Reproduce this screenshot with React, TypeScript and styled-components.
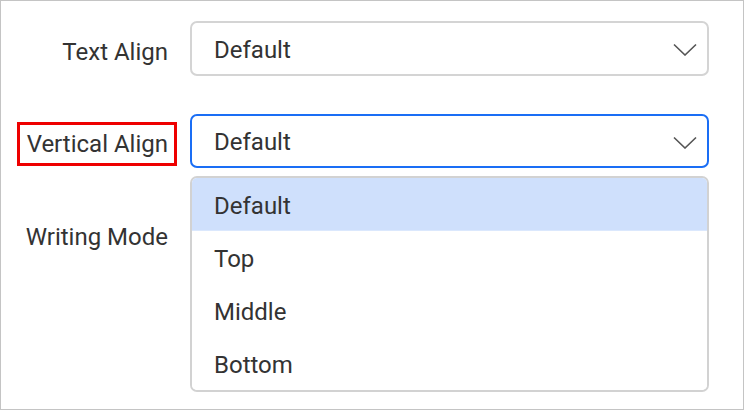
import styled, { createGlobalStyle } from "styled-components";

const GlobalStyle = createGlobalStyle`
    html, body {
        margin: 0;
        padding: 0;
        background: #ffffff;
    }
    body {
        font-family: Roboto, "Liberation Sans", sans-serif;
    }
`;

const options = ["Default", "Top", "Middle", "Bottom"];

const Chevron = () => (
    <svg width="24" height="13" viewBox="0 0 24 13" fill="none">
        <polyline points="1,1.5 12,12 23,1.5" stroke="#555555" strokeWidth="1.6" />
    </svg>
);

const App = () => {
    return (
        <>
            <GlobalStyle />
            <Panel>
                <Row>
                    <Label>Text Align</Label>
                    <Field>
                        <Select>
                            <Value>Default</Value>
                            <Chevron />
                        </Select>
                    </Field>
                </Row>
                <Row $top={38}>
                    <Label $marked>Vertical Align</Label>
                    <Field>
                        <Select $open>
                            <Value>Default</Value>
                            <Chevron />
                        </Select>
                        <Popup>
                            {options.map((o, i) => (
                                <Item key={o} $active={i === 0}>{o}</Item>
                            ))}
                        </Popup>
                    </Field>
                </Row>
                <Row $top={38}>
                    <Label>Writing Mode</Label>
                    <Field>
                        {/* covered by the open popup above */}
                        <Select />
                    </Field>
                </Row>
            </Panel>
        </>
    );
};

const Panel = styled.div`
    width: 744px;
    height: 410px;
    box-sizing: border-box;
    border: 1px solid #c4c4c4;
    padding: 20px 34px 0 0;
    display: flex;
    flex-direction: column;
    color: #333333;
    font-size: 24px;
    line-height: 28px;
`;

const Row = styled.div<{ $top?: number }>`
    display: flex;
    align-items: center;
    margin-top: ${(p) => p.$top ?? 0}px;
`;

const Label = styled.div<{ $marked?: boolean }>`
    width: 175px;
    flex-shrink: 0;
    display: flex;
    justify-content: flex-end;
    position: relative;
    padding: 6px 8px 0 0;
    box-sizing: border-box;
    white-space: nowrap;

    ${(p) =>
        p.$marked &&
        `
        &::after {
            content: "";
            position: absolute;
            left: 16px;
            right: -1px;
            top: -2px;
            bottom: -8px;
            border: 3px solid #ee0000;
        }
    `}
`;

const Field = styled.div`
    flex: 1;
    margin-left: 14px;
    position: relative;
`;

const Select = styled.div<{ $open?: boolean }>`
    height: ${(p) => (p.$open ? 54 : 55)}px;
    box-sizing: border-box;
    border: 2px solid ${(p) => (p.$open ? "#1a6ef5" : "#d4d4d4")};
    border-radius: 7px;
    background: #ffffff;
    display: flex;
    align-items: center;
    justify-content: space-between;
    padding: 2px 10px 0 22px;
`;

const Value = styled.span`
    color: #333333;
`;

const Popup = styled.div`
    position: absolute;
    left: 0;
    right: 0;
    top: 62px;
    z-index: 2;
    background: #ffffff;
    border: 2px solid #d2d2d2;
    border-radius: 7px;
    overflow: hidden;
    display: flex;
    flex-direction: column;
`;

const Item = styled.div<{ $active?: boolean }>`
    height: 53px;
    display: flex;
    align-items: center;
    padding: 3px 0 0 22px;
    background: ${(p) => (p.$active ? "#cfe0fc" : "#ffffff")};
    border-bottom: ${(p) => (p.$active ? "1px solid #dbe8fd" : "none")};
    box-sizing: border-box;
`;

export default App;
